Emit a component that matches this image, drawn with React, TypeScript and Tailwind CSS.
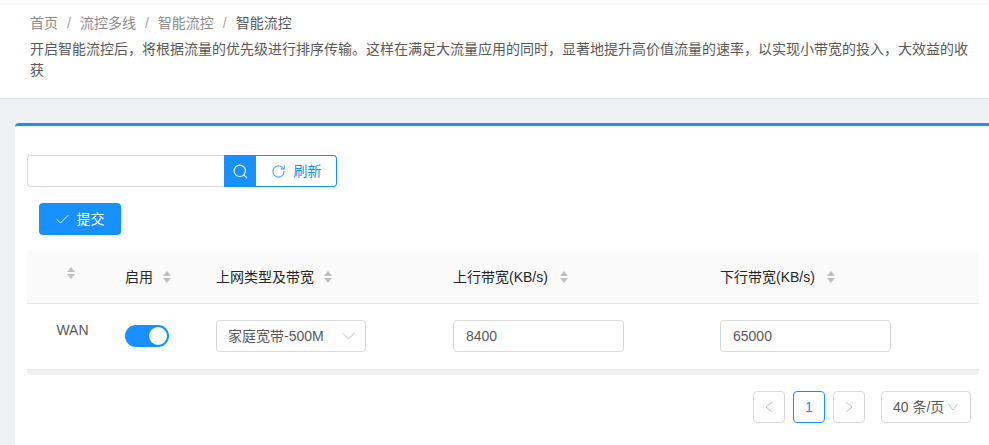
import React from "react";
import { Search, RotateCw, Check } from "lucide-react";

const font = "font-['Liberation_Sans','Noto_Sans_CJK_SC',sans-serif]";

function Sort({ className = "" }: { className?: string }) {
  return (
    <svg width="8" height="12" viewBox="0 0 8 12" className={`shrink-0 ${className}`} fill="#bfbfbf">
      <path d="M4 0 L8 5 H0 Z" />
      <path d="M0 7 H8 L4 12 Z" />
    </svg>
  );
}

function Down({ w = 13 }: { w?: number }) {
  return (
    <svg width={w} height="8" viewBox={`0 0 ${w} 8`} className="shrink-0" fill="none" stroke="#bfbfbf" strokeWidth="1">
      <path d={`M0.5 1 L${w / 2} 7 L${w - 0.5} 1`} />
    </svg>
  );
}

function Side({ right = false }: { right?: boolean }) {
  return (
    <svg width="8" height="12" viewBox="0 0 8 12" fill="none" stroke="#bfbfbf" strokeWidth="1">
      <path d={right ? "M1 1 L7 6 L1 11" : "M7 1 L1 6 L7 11"} />
    </svg>
  );
}

function Field({ value, className = "" }: { value: string; className?: string }) {
  return (
    <div className={`h-8 w-[171px] rounded border border-[#d9d9d9] pl-3 flex items-center text-sm text-[#595959] ${className}`}>
      {value}
    </div>
  );
}

export default function App() {
  return (
    <div className={`${font} w-[989px] h-[445px] overflow-hidden bg-[#f0f1f5] text-sm`}>
      <div className="h-[5px] bg-[#fafafa]" />
      <div className="h-[94px] bg-white border-b border-[#e4e6ea] pl-[30px] pr-[15px] pt-[9px]">
        <div className="flex h-[18px] items-center text-[14px] leading-[18px] text-[#8c8c8c]">
          <span>首页</span>
          <span className="mx-[9px] text-[#a6a6a6]">/</span>
          <span>流控多线</span>
          <span className="mx-[9px] text-[#a6a6a6]">/</span>
          <span>智能流控</span>
          <span className="mx-[9px] text-[#a6a6a6]">/</span>
          <span className="text-[#595959]">智能流控</span>
        </div>
        <p className="mt-[7px] text-[14px] leading-[21px] text-[#595959]">
          开启智能流控后，将根据流量的优先级进行排序传输。这样在满足大流量应用的同时，显著地提升高价值流量的速率，以实现小带宽的投入，大效益的收获
        </p>
      </div>
      <div className="ml-[15px] mt-[24px] h-[322px] bg-white border-t-[3px] border-[#1890ff] rounded-tl pl-[12px] pr-[10px] pt-[29px]">
        <div className="flex h-8">
          <div className="w-[197px] rounded-l border border-r-0 border-[#d9d9d9]" />
          <div className="w-8 bg-[#1890ff] flex items-center justify-center text-white">
            <Search size={17} strokeWidth={1.5} />
          </div>
          <div className="w-[81px] rounded-r border border-l-0 border-[#1890ff] flex items-center justify-center gap-[8px] text-[#1890ff]">
            <RotateCw size={15} strokeWidth={1.6} />
            <span>刷新</span>
          </div>
        </div>
        <div className="mt-4 ml-3 w-[82px] h-8 rounded bg-[#1890ff] text-white flex items-center justify-center gap-[6px] pr-[2px]">
          <Check size={17} strokeWidth={1.3} />
          <span>提交</span>
        </div>
        <div className="mt-[15px] grid grid-cols-[88px_91px_237px_267px_269px] h-[54px] rounded-t bg-[#fafafa] border-b border-[#e8e8e8] text-[#262626] items-center">
          <div className="flex justify-center pb-[8px]"><Sort /></div>
          <div className="pl-[10px] flex items-center gap-[10px]"><span>启用</span><Sort /></div>
          <div className="pl-[10px] flex items-center gap-[10px]"><span>上网类型及带宽</span><Sort /></div>
          <div className="pl-[10px] flex items-center gap-[12px]"><span>上行带宽(KB/s)</span><Sort /></div>
          <div className="pl-[10px] flex items-center gap-[12px]"><span>下行带宽(KB/s)</span><Sort /></div>
        </div>
        <div className="grid grid-cols-[88px_91px_237px_267px_269px] h-[66px] pb-[2px] items-center border-b border-[#e8e8e8] text-[#595959]">
          <div className="text-center pb-[12px] pl-[3px]">WAN</div>
          <div className="pl-[10px]">
            <div className="relative w-11 h-[22px] rounded-full bg-[#1890ff]">
              <span className="absolute right-[2px] top-[2px] w-[18px] h-[18px] rounded-full bg-white" />
            </div>
          </div>
          <div className="pl-[10px]">
            <div className="w-[150px] h-8 rounded border border-[#d9d9d9] pl-[11px] pr-[10px] flex items-center justify-between">
              <span>家庭宽带-500M</span>
              <Down />
            </div>
          </div>
          <div className="pl-[10px]"><Field value="8400" /></div>
          <div className="pl-[10px]"><Field value="65000" /></div>
        </div>
        <div className="h-[5px] bg-[#f0f0f0] rounded-b-sm" />
        <div className="mt-4 flex items-center justify-end pr-2 text-[#595959]">
          <div className="w-8 h-8 rounded border border-[#d9d9d9] flex items-center justify-center">
            <Side />
          </div>
          <div className="ml-2 w-8 h-8 rounded border border-[#1890ff] flex items-center justify-center text-[#1890ff]">1</div>
          <div className="ml-2 w-8 h-8 rounded border border-[#d9d9d9] flex items-center justify-center">
            <Side right />
          </div>
          <div className="ml-4 w-[90px] h-8 rounded border border-[#d9d9d9] pl-[11px] pr-[12px] flex items-center justify-between">
            <span className="whitespace-nowrap">40 条/页</span>
            <Down w={10} />
          </div>
        </div>
      </div>
    </div>
  );
}
